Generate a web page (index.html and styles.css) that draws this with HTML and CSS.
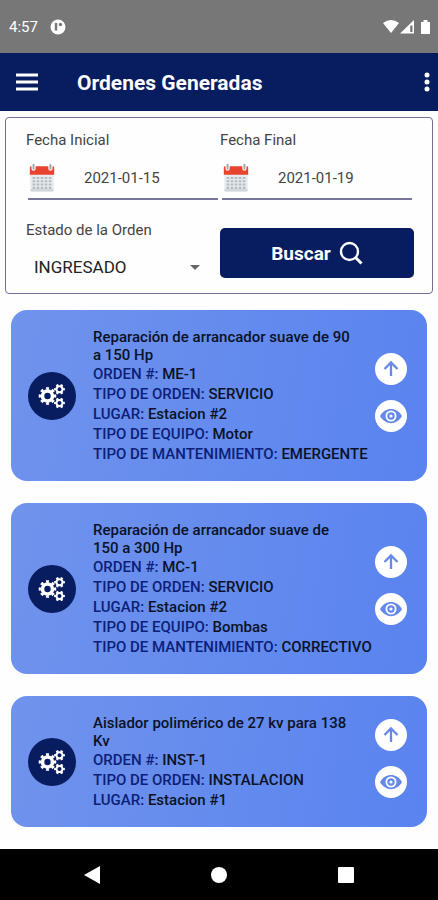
FILE: index.html
```html
<!DOCTYPE html>
<html lang="es">
<head>
    <meta charset="UTF-8">
    <meta name="viewport" content="width=device-width, initial-scale=1.0">
    <title>Ordenes Generadas</title>
    <link rel="stylesheet" href="styles.css">
</head>
<body>
    <!-- shared icons -->
    <svg class="sprite" aria-hidden="true">
        <symbol id="gears" viewBox="0 0 48 48">
            <g fill="none" stroke="#fff">
                <circle cx="19.500" cy="24" r="5" stroke-width="3.600"/>
                <circle cx="19.500" cy="24" r="7.400" stroke-width="2.800" pathLength="16" stroke-dasharray="1" stroke-dashoffset="0.5"/>
                <circle cx="31.500" cy="17.200" r="3" stroke-width="2"/>
                <circle cx="31.500" cy="17.200" r="4.400" stroke-width="2" pathLength="12" stroke-dasharray="1" stroke-dashoffset="0.5"/>
                <circle cx="31.500" cy="31" r="3" stroke-width="2"/>
                <circle cx="31.500" cy="31" r="4.400" stroke-width="2" pathLength="12" stroke-dasharray="1" stroke-dashoffset="0.5"/>
            </g>
        </symbol>
        <symbol id="arrow-up" viewBox="0 0 32 32">
            <path d="M16 23V10.500M9.500 16L16 9.500L22.500 16" fill="none" stroke="#6688ea" stroke-width="2.300"/>
        </symbol>
        <symbol id="eye" viewBox="0 0 32 32">
            <path d="M5 16C10 6.500 22 6.500 27 16C22 25.500 10 25.500 5 16Z" fill="#6688ea"/>
            <circle cx="16" cy="16" r="4.600" fill="#6688ea" stroke="#fff" stroke-width="1.800"/>
            <circle cx="16" cy="16" r="1.600" fill="#fff"/>
        </symbol>
        <symbol id="calendar" viewBox="0 0 28 32">
            <rect x="1.500" y="5" width="25" height="25" rx="1.500" fill="#e6ebee"/>
            <path d="M1.500 28H26.500V29Q26.500 30.500 25 30.500H3Q1.500 30.500 1.500 29Z" fill="#cdd5d9"/>
            <path d="M1 12.500V5Q1 3.500 2.500 3.500H25.500Q27 3.500 27 5V12.500Z" fill="#e8432f"/>
            <path d="M5 1.500V6M23 1.500V6" stroke="#fff" stroke-width="4.500" stroke-linecap="round"/>
            <path d="M5 2V6M23 2V6" stroke="#a3a9ad" stroke-width="2.200" stroke-linecap="round"/>
            <path d="M4 16H24M4 19.500H24M4 23H24M4 26.500H24" stroke="#b3bcc2" stroke-width="2.200" stroke-dasharray="2.800 1.500"/>
        </symbol>
    </svg>

    <div class="screen">
        <div class="status-bar">
            <span class="time">4:57</span>
            <svg class="status-app" viewBox="0 0 16 16">
                <circle cx="8" cy="8" r="7.500" fill="#fff"/>
                <path d="M6 4V11.500" stroke="#777" stroke-width="2.400"/>
                <circle cx="10.500" cy="5.500" r="1.700" fill="#777"/>
            </svg>
            <svg class="status-icons" viewBox="0 0 48 16">
                <path d="M0 4Q8 -2 16 4L8 14Z" fill="#fff"/>
                <path d="M31 1V14.500H17Z" fill="#fff"/>
                <path d="M27.200 6.500H29.500V13H27.200Z" fill="#777"/>
                <path d="M38 3H40.500V1H44.500V3H47V15H38Z" fill="#fff"/>
            </svg>
        </div>

        <header class="app-bar">
            <button class="icon-btn" aria-label="Menu">
                <svg width="22" height="18" viewBox="0 0 22 18"><path d="M0 2H22M0 9H22M0 16H22" stroke="#fff" stroke-width="3"/></svg>
            </button>
            <h1>Ordenes Generadas</h1>
            <button class="icon-btn" aria-label="Más opciones">
                <svg width="6" height="20" viewBox="0 0 6 20" fill="#fff"><circle cx="3" cy="3" r="2.500"/><circle cx="3" cy="10" r="2.500"/><circle cx="3" cy="17" r="2.500"/></svg>
            </button>
        </header>

        <main>
            <form class="filters">
                <div class="field">
                    <label for="fecha-inicial">Fecha Inicial</label>
                    <div class="date-box">
                        <svg class="calendar"><use href="#calendar"/></svg>
                        <input type="text" id="fecha-inicial" value="2021-01-15">
                    </div>
                </div>
                <div class="field">
                    <label for="fecha-final">Fecha Final</label>
                    <div class="date-box">
                        <svg class="calendar"><use href="#calendar"/></svg>
                        <input type="text" id="fecha-final" value="2021-01-19">
                    </div>
                </div>
                <div class="field">
                    <label for="estado">Estado de la Orden</label>
                    <div class="select-box">
                        <select id="estado">
                            <option>INGRESADO</option>
                        </select>
                    </div>
                </div>
                <button type="button" class="search-btn">
                    Buscar
                    <svg width="24" height="24" viewBox="0 0 24 24" fill="none" stroke="#fff"><circle cx="10.500" cy="10.500" r="8.500" stroke-width="2.400"/><path d="M16.500 16.500L22.500 22.500" stroke-width="3"/></svg>
                </button>
            </form>

            <div class="orders">
                <article class="card">
                    <span class="badge"><svg><use href="#gears"/></svg></span>
                    <div class="info">
                        <h2>Reparación de arrancador suave de 90 a 150 Hp</h2>
                        <p>ORDEN #: <b>ME-1</b></p>
                        <p>TIPO DE ORDEN: <b>SERVICIO</b></p>
                        <p>LUGAR: <b>Estacion #2</b></p>
                        <p>TIPO DE EQUIPO: <b>Motor</b></p>
                        <p>TIPO DE MANTENIMIENTO: <b>EMERGENTE</b></p>
                    </div>
                    <div class="actions">
                        <button aria-label="Subir"><svg><use href="#arrow-up"/></svg></button>
                        <button aria-label="Ver"><svg><use href="#eye"/></svg></button>
                    </div>
                </article>

                <article class="card">
                    <span class="badge"><svg><use href="#gears"/></svg></span>
                    <div class="info">
                        <h2>Reparación de arrancador suave de 150 a 300 Hp</h2>
                        <p>ORDEN #: <b>MC-1</b></p>
                        <p>TIPO DE ORDEN: <b>SERVICIO</b></p>
                        <p>LUGAR: <b>Estacion #2</b></p>
                        <p>TIPO DE EQUIPO: <b>Bombas</b></p>
                        <p>TIPO DE MANTENIMIENTO: <b>CORRECTIVO</b></p>
                    </div>
                    <div class="actions">
                        <button aria-label="Subir"><svg><use href="#arrow-up"/></svg></button>
                        <button aria-label="Ver"><svg><use href="#eye"/></svg></button>
                    </div>
                </article>

                <article class="card">
                    <span class="badge"><svg><use href="#gears"/></svg></span>
                    <div class="info">
                        <h2>Aislador polimérico de 27 kv para 138 Kv</h2>
                        <p>ORDEN #: <b>INST-1</b></p>
                        <p>TIPO DE ORDEN: <b>INSTALACION</b></p>
                        <p>LUGAR: <b>Estacion #1</b></p>
                    </div>
                    <div class="actions">
                        <button aria-label="Subir"><svg><use href="#arrow-up"/></svg></button>
                        <button aria-label="Ver"><svg><use href="#eye"/></svg></button>
                    </div>
                </article>
            </div>
        </main>

        <nav class="nav-bar">
            <button aria-label="Atrás"><svg width="18" height="20" viewBox="0 0 18 20"><path d="M17 1V19L1 10Z" fill="#fff"/></svg></button>
            <button aria-label="Inicio"><svg width="18" height="18" viewBox="0 0 18 18"><circle cx="9" cy="9" r="8" fill="#fff"/></svg></button>
            <button aria-label="Recientes"><svg width="18" height="18" viewBox="0 0 18 18"><rect x="1" y="1" width="16" height="16" rx="1" fill="#fff"/></svg></button>
        </nav>
    </div>
</body>
</html>
```
FILE: styles.css
```css
* {
    box-sizing: border-box;
}

body {
    margin: 0;
    font-family: Roboto, "Liberation Sans", sans-serif;
    background-color: #fefefe;
    color: #444;
}

button {
    border: none;
    padding: 0;
    background: none;
    font-family: inherit;
    cursor: pointer;
}

svg {
    display: block;
}

.sprite {
    display: none;
}

.screen {
    display: flex;
    flex-direction: column;
    min-height: 100vh;
}

main {
    flex: 1;
    padding: 6px 5px 22px;
}

/* top bars */
.status-bar {
    display: flex;
    align-items: center;
    gap: 12px;
    height: 53px;
    padding: 0 7px 0 9px;
    background-color: #777;
    color: #fff;
}

.time {
    font-size: 15px;
}

.status-app {
    width: 16px;
    height: 16px;
}

.status-icons {
    width: 48px;
    height: 16px;
    margin-left: auto;
}

.app-bar {
    display: flex;
    align-items: center;
    height: 58px;
    padding: 0 8px 0 16px;
    background-color: #081c60;
    color: #fff;
}

.app-bar h1 {
    flex: 1;
    margin: 0 0 0 39px;
    padding-top: 2px;
    font-size: 21px;
    font-weight: 700;
}

/* search form */
.filters {
    display: grid;
    grid-template-columns: 1fr 1fr;
    row-gap: 20px;
    padding: 12px 18px 9px 20px;
    border: 1px solid #6e6e98;
    border-radius: 4px;
}

.field label {
    display: block;
    font-size: 15px;
    line-height: 20px;
}

.date-box {
    display: flex;
    align-items: center;
    height: 50px;
    margin: 0 2px;
    padding-top: 8px;
    border-bottom: 2px solid #77779c;
}

.calendar {
    flex: none;
    width: 28px;
    height: 30px;
}

.date-box input {
    width: 100%;
    min-width: 0;
    padding: 0 0 0 28px;
    border: none;
    outline: none;
    background: none;
    font-family: inherit;
    font-size: 15px;
    color: #444;
}

.select-box {
    position: relative;
    margin-top: 10px;
}

.select-box::after {
    content: "";
    position: absolute;
    right: 20px;
    top: 15px;
    border: 5px solid transparent;
    border-top-color: #666;
    border-bottom: none;
    pointer-events: none;
}

.select-box select {
    display: block;
    appearance: none;
    width: 100%;
    height: 34px;
    padding: 0 8px;
    border: none;
    background: none;
    font-family: inherit;
    font-size: 17px;
    color: #222;
}

.search-btn {
    display: flex;
    align-items: center;
    justify-content: center;
    gap: 8px;
    height: 50px;
    margin-top: 8px;
    border-radius: 5px;
    background-color: #081c60;
    color: #fff;
    font-size: 19px;
    font-weight: 700;
}

/* orders */
.orders {
    display: flex;
    flex-direction: column;
    gap: 22px;
    margin: 16px 6px 0;
}

.card {
    display: flex;
    align-items: center;
    padding: 18px 20px 17px 17px;
    border-radius: 16px;
    background-image: linear-gradient(100deg, #7093ec, #5983ef);
}

.badge {
    flex: none;
    border-radius: 50%;
    background-color: #081c60;
}

.badge svg {
    width: 48px;
    height: 48px;
}

.info {
    flex: 1;
    margin-left: 17px;
    font-size: 15px;
    font-weight: 500;
    line-height: 20px;
    white-space: nowrap;
    color: #0c2078;
}

.info h2 {
    max-width: 260px;
    margin: 0;
    font-size: 15px;
    font-weight: 500;
    line-height: 18px;
    white-space: normal;
    color: #0b1226;
}

.info p {
    margin: 0;
}

.info b {
    font-weight: 500;
    color: #0b1226;
}

.actions {
    display: flex;
    flex: none;
    flex-direction: column;
    gap: 15px;
    padding-bottom: 8px;
}

.actions button {
    border-radius: 50%;
    background-color: #fff;
}

.actions svg {
    width: 32px;
    height: 32px;
}

/* system navigation */
.nav-bar {
    display: flex;
    align-items: center;
    height: 51px;
    padding: 0 29px;
    background-color: #000;
}

.nav-bar button {
    display: flex;
    flex: 1;
    justify-content: center;
}
```
